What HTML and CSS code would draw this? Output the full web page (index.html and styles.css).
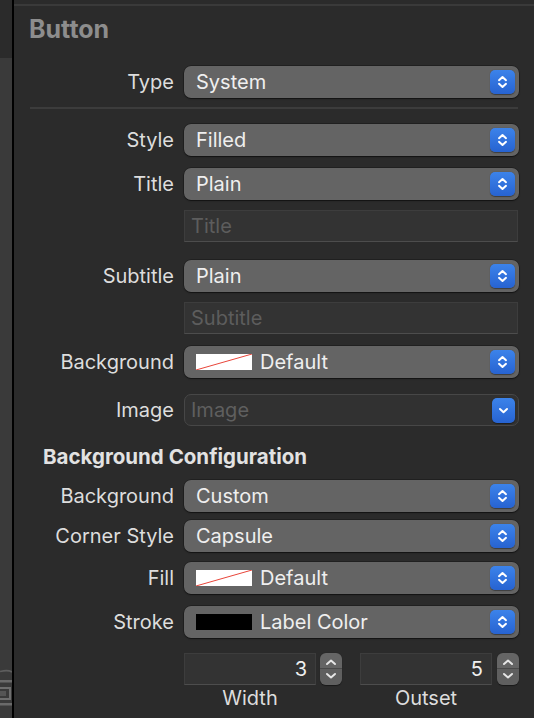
FILE: index.html
```html
<!DOCTYPE html>
<html lang="en">
<head>
<meta charset="utf-8">
<title>Button Inspector</title>
<link rel="stylesheet" href="styles.css">
</head>
<body>
<div class="app">
  <aside class="strip">
    <div class="strip-top"></div>
    <svg class="strip-icon" width="12" height="44" viewBox="0 0 12 44">
      <path d="M0 3.5 Q8 1.5 12 4" fill="none" stroke="#5e5e5e" stroke-width="1.6"/>
      <rect x="0" y="12" width="12" height="2.5" fill="#6a6a6a"/>
      <rect x="-4" y="20" width="14" height="11" fill="none" stroke="#6e6e6e" stroke-width="2"/>
      <rect x="0" y="23" width="6" height="5" fill="#555"/>
      <rect x="0" y="35" width="12" height="2.5" fill="#6a6a6a"/>
    </svg>
  </aside>
  <div class="divider"></div>
  <main class="panel">
    <div class="topline"></div>
    <h1 class="heading">Button</h1>

    <div class="row m-type">
      <span class="label">Type</span>
      <div class="popup"><span class="val">System</span><span class="blue"><svg width="25" height="24" viewBox="0 0 25 24"><path d="M9 10.2 L12.5 7 L16 10.2 M9 13.8 L12.5 17 L16 13.8" fill="none" stroke="#fff" stroke-width="2" stroke-linecap="round" stroke-linejoin="round"/></svg></span></div>
    </div>

    <hr class="sep">

    <div class="row m-style">
      <span class="label">Style</span>
      <div class="popup"><span class="val">Filled</span><span class="blue"><svg width="25" height="24" viewBox="0 0 25 24"><path d="M9 10.2 L12.5 7 L16 10.2 M9 13.8 L12.5 17 L16 13.8" fill="none" stroke="#fff" stroke-width="2" stroke-linecap="round" stroke-linejoin="round"/></svg></span></div>
    </div>

    <div class="row m-12">
      <span class="label">Title</span>
      <div class="popup"><span class="val">Plain</span><span class="blue"><svg width="25" height="24" viewBox="0 0 25 24"><path d="M9 10.2 L12.5 7 L16 10.2 M9 13.8 L12.5 17 L16 13.8" fill="none" stroke="#fff" stroke-width="2" stroke-linecap="round" stroke-linejoin="round"/></svg></span></div>
    </div>

    <div class="row m-10">
      <span class="label"></span>
      <div class="field">Title</div>
    </div>

    <div class="row m-18">
      <span class="label">Subtitle</span>
      <div class="popup"><span class="val">Plain</span><span class="blue"><svg width="25" height="24" viewBox="0 0 25 24"><path d="M9 10.2 L12.5 7 L16 10.2 M9 13.8 L12.5 17 L16 13.8" fill="none" stroke="#fff" stroke-width="2" stroke-linecap="round" stroke-linejoin="round"/></svg></span></div>
    </div>

    <div class="row m-10">
      <span class="label"></span>
      <div class="field">Subtitle</div>
    </div>

    <div class="row m-12">
      <span class="label">Background</span>
      <div class="popup"><span class="swatch"><svg width="56" height="16" viewBox="0 0 56 16"><rect width="56" height="16" fill="#fff"/><path d="M0 16 L56 0" stroke="#e8453a" stroke-width="1"/></svg></span><span class="val">Default</span><span class="blue"><svg width="25" height="24" viewBox="0 0 25 24"><path d="M9 10.2 L12.5 7 L16 10.2 M9 13.8 L12.5 17 L16 13.8" fill="none" stroke="#fff" stroke-width="2" stroke-linecap="round" stroke-linejoin="round"/></svg></span></div>
    </div>

    <div class="row m-16">
      <span class="label">Image</span>
      <div class="popup popup-disabled"><span class="val">Image</span><span class="blue blue-small"><svg width="23" height="25" viewBox="0 0 23 25"><path d="M8 11 L11.5 14.2 L15 11" fill="none" stroke="#fff" stroke-width="2" stroke-linecap="round" stroke-linejoin="round"/></svg></span></div>
    </div>

    <h2 class="subheading">Background Configuration</h2>

    <div class="row m-11">
      <span class="label">Background</span>
      <div class="popup"><span class="val">Custom</span><span class="blue"><svg width="25" height="24" viewBox="0 0 25 24"><path d="M9 10.2 L12.5 7 L16 10.2 M9 13.8 L12.5 17 L16 13.8" fill="none" stroke="#fff" stroke-width="2" stroke-linecap="round" stroke-linejoin="round"/></svg></span></div>
    </div>

    <div class="row m-8">
      <span class="label">Corner Style</span>
      <div class="popup"><span class="val">Capsule</span><span class="blue"><svg width="25" height="24" viewBox="0 0 25 24"><path d="M9 10.2 L12.5 7 L16 10.2 M9 13.8 L12.5 17 L16 13.8" fill="none" stroke="#fff" stroke-width="2" stroke-linecap="round" stroke-linejoin="round"/></svg></span></div>
    </div>

    <div class="row m-10">
      <span class="label">Fill</span>
      <div class="popup"><span class="swatch"><svg width="56" height="16" viewBox="0 0 56 16"><rect width="56" height="16" fill="#fff"/><path d="M0 16 L56 0" stroke="#e8453a" stroke-width="1"/></svg></span><span class="val">Default</span><span class="blue"><svg width="25" height="24" viewBox="0 0 25 24"><path d="M9 10.2 L12.5 7 L16 10.2 M9 13.8 L12.5 17 L16 13.8" fill="none" stroke="#fff" stroke-width="2" stroke-linecap="round" stroke-linejoin="round"/></svg></span></div>
    </div>

    <div class="row m-12">
      <span class="label">Stroke</span>
      <div class="popup"><span class="swatch swatch-black"></span><span class="val">Label Color</span><span class="blue"><svg width="25" height="24" viewBox="0 0 25 24"><path d="M9 10.2 L12.5 7 L16 10.2 M9 13.8 L12.5 17 L16 13.8" fill="none" stroke="#fff" stroke-width="2" stroke-linecap="round" stroke-linejoin="round"/></svg></span></div>
    </div>

    <div class="row m-15">
      <span class="label"></span>
      <div class="steppers">
        <div class="numfield">3</div>
        <div class="stepper"><svg width="22" height="32" viewBox="0 0 22 32"><path d="M7 11 L11 7.5 L15 11 M7 21 L11 24.5 L15 21" fill="none" stroke="#e6e6e6" stroke-width="2" stroke-linecap="round" stroke-linejoin="round"/></svg></div>
        <div class="numfield numfield-2">5</div>
        <div class="stepper stepper-2"><svg width="22" height="32" viewBox="0 0 22 32"><path d="M7 11 L11 7.5 L15 11 M7 21 L11 24.5 L15 21" fill="none" stroke="#e6e6e6" stroke-width="2" stroke-linecap="round" stroke-linejoin="round"/></svg></div>
      </div>
    </div>

    <div class="caprow">
      <span class="label"></span>
      <div class="captions">
        <span class="cap">Width</span>
        <span class="cap cap-2">Outset</span>
      </div>
    </div>
  </main>
</div>
</body>
</html>
```

FILE: styles.css
```css
html, body {
  margin: 0;
  padding: 0;
}
body {
  background: #2b2b2b;
  font-family: Inter, "Noto Sans", "Liberation Sans", sans-serif;
  width: 534px;
  height: 718px;
  overflow: hidden;
}
.app {
  display: flex;
  height: 718px;
}
.strip {
  width: 12px;
  background: #3a3a3a;
  display: flex;
  flex-direction: column;
  overflow: hidden;
}
.strip-top {
  height: 58px;
  background: #2b2b2b;
}
.strip-icon {
  margin-top: auto;
  margin-bottom: 6px;
  display: block;
}
.divider {
  width: 2px;
  background: #000;
}
.panel {
  flex: 1;
  display: flex;
  flex-direction: column;
}
.topline {
  margin-top: 4px;
  height: 2px;
  background: #3a3a3a;
}
.heading {
  margin: 9px 0 0 15px;
  font-size: 25px;
  line-height: 28px;
  font-weight: 700;
  color: #8d8d8d;
}
.subheading {
  margin: 19px 0 0 29px;
  font-size: 20.5px;
  line-height: 24px;
  font-weight: 700;
  color: #e2e2e2;
}
.sep {
  margin: 9px 16px 0 16px;
  height: 2px;
  border: 0;
  background: #3c3c3c;
}
.row {
  display: grid;
  grid-template-columns: 160px 1fr;
  column-gap: 10px;
  align-items: center;
  height: 32px;
  margin-right: 15px;
}
.m-type { margin-top: 23px; }
.m-style { margin-top: 15px; }
.m-8 { margin-top: 8px; }
.m-10 { margin-top: 10px; }
.m-11 { margin-top: 11px; }
.m-12 { margin-top: 12px; }
.m-15 { margin-top: 15px; }
.m-16 { margin-top: 16px; }
.m-18 { margin-top: 18px; }
.label {
  text-align: right;
  color: #dddddd;
  font-size: 20px;
  line-height: 24px;
  white-space: nowrap;
}
.popup {
  height: 32px;
  box-sizing: border-box;
  border-radius: 7px;
  background: #646464;
  display: flex;
  align-items: center;
  padding-left: 12px;
  box-shadow: 0 0 0 0.5px rgba(0, 0, 0, 0.45), 0 1px 1.5px rgba(0, 0, 0, 0.45);
}
.val {
  flex: 1;
  color: #efefef;
  font-size: 20px;
  line-height: 24px;
  white-space: nowrap;
}
.blue {
  width: 25px;
  height: 24px;
  border-radius: 5px;
  background: linear-gradient(#3c83ea, #2763d1);
  margin-right: 4px;
  display: flex;
  box-shadow: 0 0.5px 1px rgba(0, 0, 0, 0.4);
}
.blue svg {
  display: block;
}
.blue-small {
  width: 23px;
  height: 25px;
  margin-right: 3px;
}
.popup-disabled {
  background: #313131;
  border: 1px solid #474747;
  box-shadow: none;
  padding-left: 6px;
}
.popup-disabled .val {
  color: #5f5f5f;
}
.swatch {
  width: 56px;
  height: 16px;
  margin-right: 8px;
  display: block;
}
.swatch svg {
  display: block;
}
.swatch-black {
  background: #000;
}
.field {
  height: 32px;
  box-sizing: border-box;
  background: #333333;
  border: 1px solid #3d3d3d;
  border-bottom-color: #4d4d4d;
  color: #5d5d5d;
  padding-left: 6px;
  display: flex;
  align-items: center;
  font-size: 20px;
  margin-right: 1px;
}
.steppers {
  display: flex;
  align-items: center;
  height: 32px;
}
.numfield {
  width: 132px;
  height: 32px;
  box-sizing: border-box;
  background: #333333;
  border: 1px solid #3d3d3d;
  border-bottom-color: #4d4d4d;
  color: #efefef;
  font-size: 20px;
  display: flex;
  align-items: center;
  justify-content: flex-end;
  padding-right: 8px;
}
.numfield-2 {
  margin-left: 18px;
}
.stepper {
  width: 22px;
  height: 32px;
  border-radius: 6px;
  margin-left: 4px;
  background: linear-gradient(#656565 0, #656565 15.5px, #4a4a4a 15.5px, #4a4a4a 16.5px, #5f5f5f 16.5px);
  box-shadow: 0 0.5px 1px rgba(0, 0, 0, 0.45);
}
.stepper svg {
  display: block;
}
.stepper-2 {
  margin-left: 5px;
}
.caprow {
  display: grid;
  grid-template-columns: 160px 1fr;
  column-gap: 10px;
  margin-top: 1px;
}
.captions {
  display: flex;
}
.cap {
  width: 132px;
  text-align: center;
  color: #dddddd;
  font-size: 20px;
  line-height: 24px;
}
.cap-2 {
  margin-left: 44px;
}
```
